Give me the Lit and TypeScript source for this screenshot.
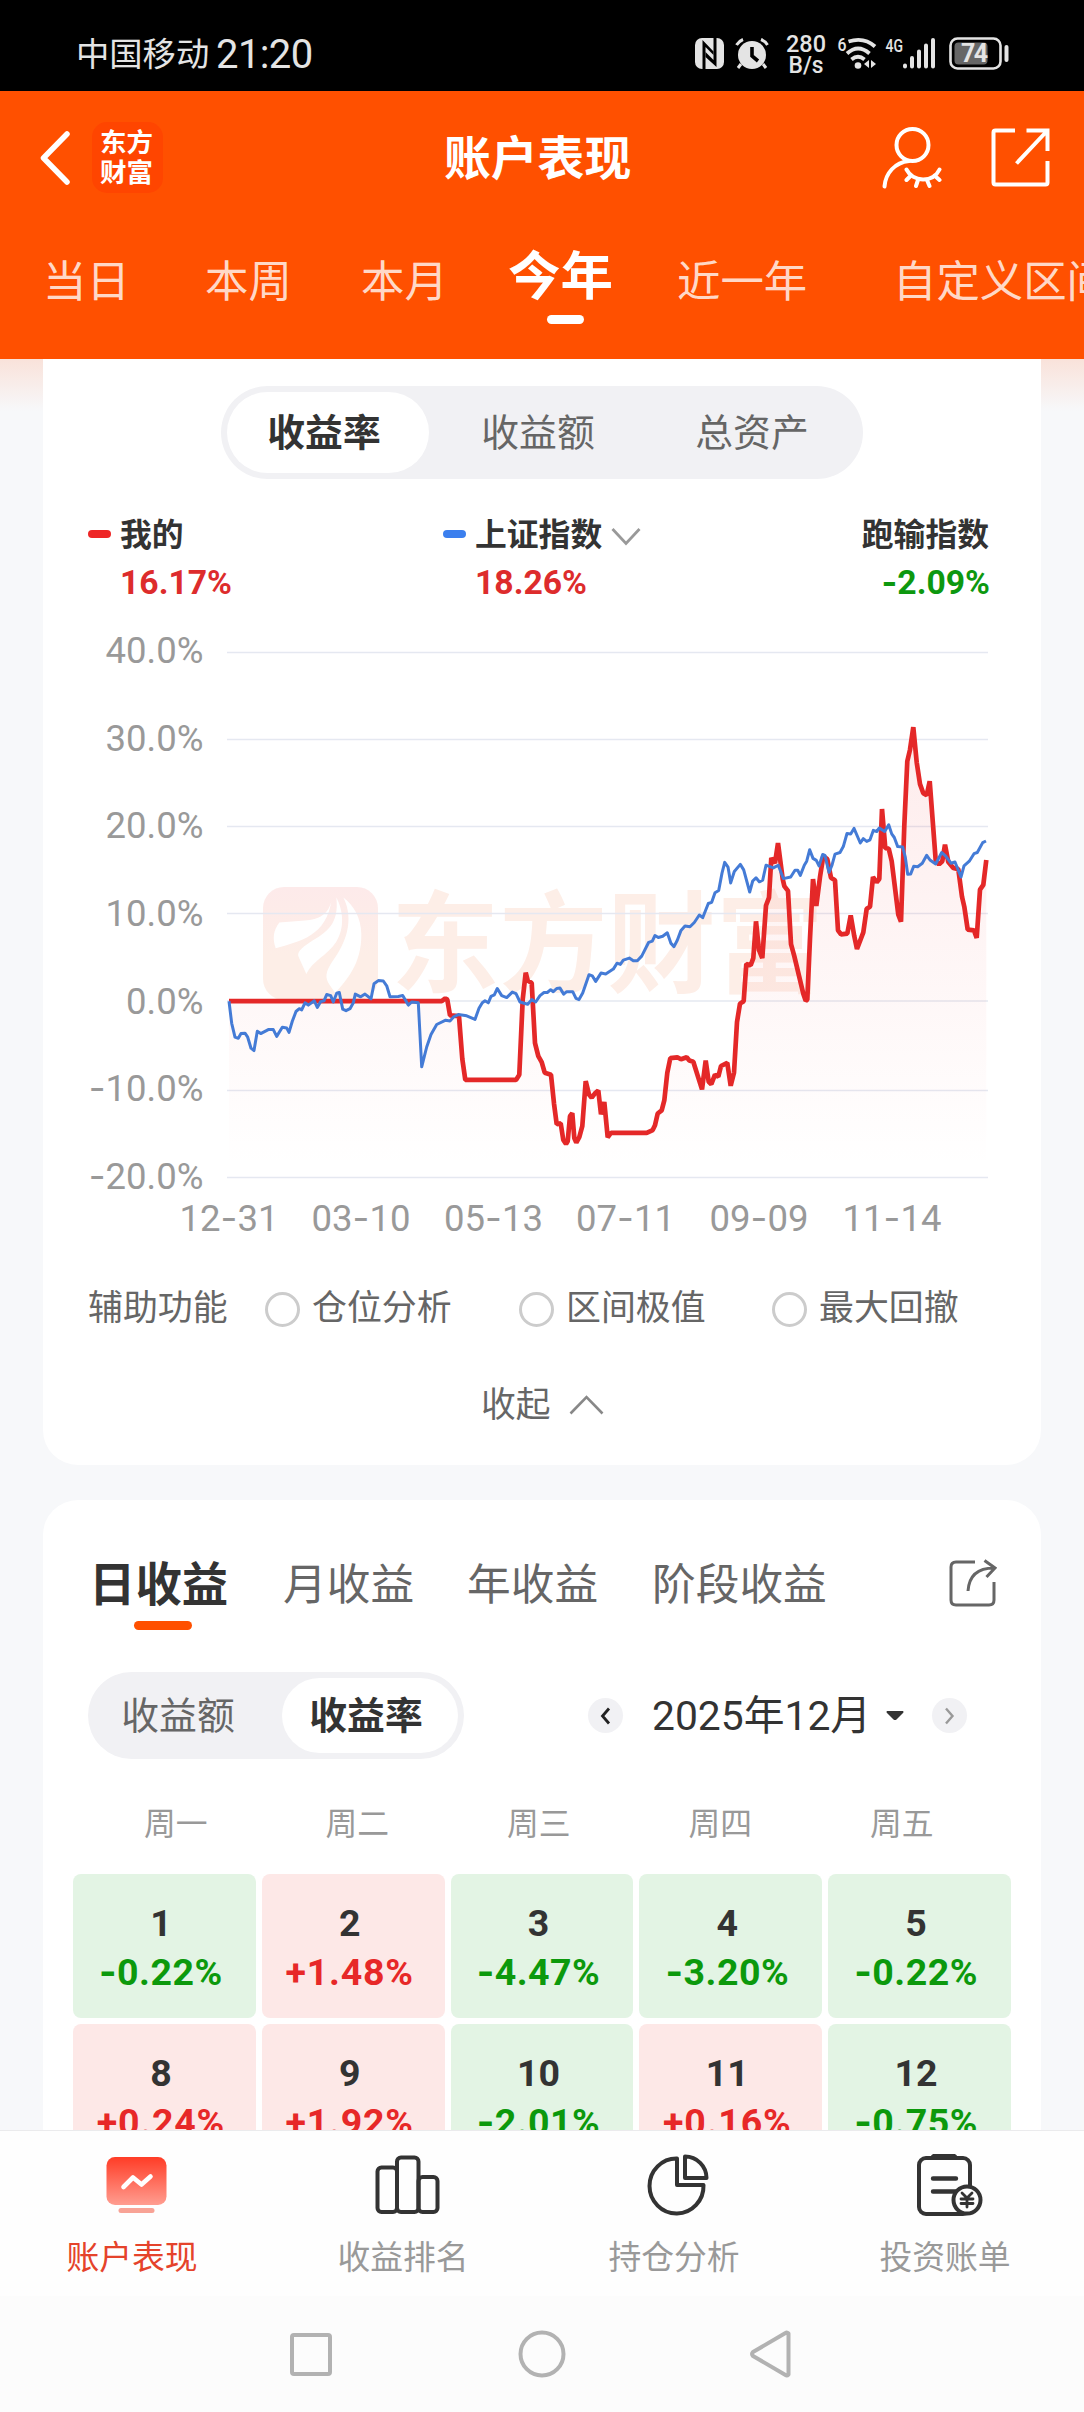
import { LitElement, html, svg, css } from "lit";
import { customElement, property } from "lit/decorators.js";

type Pt = [number, number];

/* Series are stored on a fine grid: 3 steps per pixel across, 2.529 per pixel down. */
const SX = 3;
const SY = 2.529;
const toPoints = (raw: string, dx = 0): Pt[] =>
  raw
    .trim()
    .split(/\s+/)
    .map((p) => p.split(",").map(Number))
    .map(([x, y]) => [(x + dx) / SX, y / SY] as Pt);
const path = (pts: Pt[]) => pts.map(([x, y]) => `${x.toFixed(1)},${y.toFixed(1)}`).join(" ");

const MINE: Pt[] = [
  ...toPoints(`507,964 1145,964 1156,957 1162,960 1170,1000 1197,1002 1207,1110 1216,1163 1368,1163 1378,1150
    1388,960 1397,892 1403,912 1415,918 1425,1070 1435,1103 1445,1118`),
  ...toPoints(
    `14,1145 33,1150 42,1223 50,1275 62,1273 70,1315 78,1325 83,1318 90,1255 97,1247 103,1310 109,1322
    118,1308 127,1280 137,1166 147,1200 155,1208 165,1197 175,1190 183,1250 193,1219 203,1308 213,1297 320,1297
    338,1290 345,1278 353,1248 365,1240 373,1215 382,1145 391,1108 412,1106 423,1111 440,1106 448,1114 460,1117
    486,1187 497,1114 506,1168 514,1174 525,1150 535,1155 543,1128 562,1120 572,1178 582,1145 591,1017 600,970
    611,964 619,870 632,873 640,855 648,762 657,835 667,855 678,722 687,702 694,602 705,615 714,564 728,655
    733,673 744,685 753,820 763,850 790,945 797,963 802,960 810,805 819,655 829,723 840,650 850,597 862,605
    873,652 885,658 894,785 903,795 922,793 932,747 943,800 951,832 970,790 980,730 990,725 999,650 1010,663
    1018,655 1026,478 1036,577 1046,578 1055,610 1075,745 1083,763 1093,520 1102,357 1110,328 1120,271 1130,360
    1140,415 1150,438 1160,443 1169,408 1187,608 1197,618 1207,610 1215,568 1225,612 1240,627 1255,630 1266,700
    1273,725 1283,783 1302,785 1310,804 1320,682 1330,670 1339,607`,
    1440,
  ),
];

const INDEX: Pt[] = [
  ...toPoints(`507,964 515,1020 525,1055 535,1058 543,1046 555,1045 563,1055 573,1083 582,1089 592,1040 602,1046
    625,1036 640,1036 650,1053 667,1030 680,1032 687,1043 697,1015 708,990 718,983 725,986 735,968 745,974 763,963
    772,980 782,965 792,963 800,947 812,950 820,966 830,944 838,942 848,984 858,988 870,983 880,968 886,946 902,953
    915,946 933,958 942,920 955,912 970,913 980,925 990,953 1015,952 1028,950 1045,974 1055,966 1075,968 1085,1130
    1100,1080 1113,1048 1130,1023 1157,1012 1170,1014 1182,1003 1195,998 1220,1001 1245,1010 1257,982 1267,968
    1275,963 1285,968 1293,952 1303,948 1312,932 1325,950 1340,955 1357,941 1368,945 1380,966 1403,972 1415,960
    1427,966`),
  ...toPoints(
    `0,950 12,942 22,942 32,935 40,940 50,932 60,931 71,946 80,940 98,940 108,957 117,960 128,943 147,897
    157,900 167,914 183,893 197,895 220,883 231,868 241,871 250,860 268,855 280,862 292,862 305,850 326,815 337,812
    345,798 355,803 368,800 382,791 393,818 402,826 412,810 423,785 435,774 450,776 463,765 478,746 488,753 505,717
    515,714 525,690 536,684 546,640 554,613 564,625 572,665 583,636 601,618 611,632 629,688 638,660 648,652 658,662
    668,658 678,620 700,627 715,620 730,654 752,650 765,633 773,633 781,646 793,620 800,610 809,581 819,603 829,608
    837,622 848,593 855,595 867,638 876,620 885,592 900,588 910,573 921,540 932,541 942,527 961,564 970,553 980,560
    990,556 1000,532 1010,535 1018,526 1034,535 1046,518 1055,541 1063,550 1073,573 1088,574 1096,600 1103,643
    1112,642 1121,623 1133,624 1147,615 1160,595 1170,607 1187,617 1205,588 1217,597 1233,615 1245,612 1263,650
    1272,622 1288,610 1302,591 1312,588 1328,563 1338,559`,
    1440,
  ),
];

const Y_AXIS = [
  { label: "40.0%", y: 32.500 },
  { label: "30.0%", y: 119.500 },
  { label: "20.0%", y: 206.500 },
  { label: "10.0%", y: 293.500 },
  { label: "0.0%", y: 381 },
  { label: "-10.0%", y: 470.500 },
  { label: "-20.0%", y: 557.500 },
];
const Y_BASE = [43, 131, 218, 305.5, 394, 481, 568.5];
const X_AXIS = [
  { label: "12-31", x: 169 },
  { label: "03-10", x: 301 },
  { label: "05-13", x: 433.5 },
  { label: "07-11", x: 565.5 },
  { label: "09-09", x: 699 },
  { label: "11-14", x: 832 },
];

/* The hyphen is set in a face with a longer stroke. */
const signed = (t: string) =>
  t.startsWith("-") ? html`<span class="minus">-</span>${t.slice(1)}` : t;

@customElement("status-bar")
class StatusBar extends LitElement {
  static styles = css`
    :host {
      display: flex;
      align-items: center;
      height: 91px;
      background: #000;
      color: #e4e4e4;
      padding: 16px 0 0 76px;
      box-sizing: border-box;
    }
    svg { display: block; flex: none; overflow: visible; }
    .carrier { font-size: 33.3px; width: 140px; line-height: 40px; padding-top: 2px; }
    .time { font-size: 40px; line-height: 44px; width: 479px; letter-spacing: -0.6px; padding-top: 3px; }
    .alarm { margin-left: 11px; }
    .tiny { font: 500 18px Roboto, sans-serif; }
    .rate { font: 500 23.5px Roboto, sans-serif; }
    .speed { margin-left: 18px; }
    .wifi { margin-left: 13px; }
    .cell { margin-left: 8px; }
    .battery { margin-left: 13px; }
    .level { font: 700 25px Roboto, sans-serif; }
  `;
  render() {
    return html`
      <span class="carrier">中国移动</span><span class="time">21:20</span>
      <svg width="29" height="31" viewBox="0 0 29 31">
        <rect width="29" height="31" rx="7" fill="#e4e4e4" />
        <path d="M7.500 31V2L18.500 13.500V17L10.500 9V31Z" fill="#000" />
        <path d="M21.500 0V29L10.500 19V14L18.500 22V0Z" fill="#000" />
      </svg>
      <svg class="alarm" width="34" height="31" viewBox="0 0 34 31">
        <circle cx="17" cy="17" r="14" fill="#e4e4e4" />
        <path d="M17 9V18L23 23" fill="none" stroke="#000" stroke-width="3.600" />
        <path d="M1.500 7Q4 3 8 1.500M32.500 7Q30 3 26 1.500M6 26L3 30M28 26L31 30" fill="none" stroke="#e4e4e4" stroke-width="3" />
      </svg>
      <svg class="speed" width="38" height="41" viewBox="0 0 38 41" fill="#e4e4e4">
        <text class="rate" x="-1" y="18.500" textLength="40" lengthAdjust="spacingAndGlyphs">280</text>
        <text class="rate" x="1.500" y="39.500" textLength="35" lengthAdjust="spacingAndGlyphs">B/s</text>
      </svg>
      <svg class="wifi" width="39" height="33" viewBox="0 0 39 33">
        <text class="tiny" x="-0.5" y="14" fill="#e4e4e4" textLength="9" lengthAdjust="spacingAndGlyphs">6</text>
        <g fill="none" stroke="#e4e4e4" stroke-width="3.800">
          <path d="M10.500 4.500Q26 -0.500 37 9.500" />
          <path d="M9 16.500Q20 6.500 31.500 16.500" />
          <path d="M13.500 22.500Q20 17 26.500 22.500" />
        </g>
        <circle cx="20" cy="28.500" r="3.300" fill="#e4e4e4" />
        <path d="M31 23V31L26 27ZM33 23V31L38 27Z" fill="#e4e4e4" />
      </svg>
      <svg class="cell" width="51" height="33" viewBox="0 0 51 33">
        <text class="tiny" x="0.5" y="14.500" fill="#e4e4e4" textLength="17.500" lengthAdjust="spacingAndGlyphs">4G</text>
        <g stroke="#e4e4e4" stroke-width="4" stroke-linecap="round">
          <path d="M20 28.500V29.500M27 21V29.500M34 14.500V29.500M41 8.500V29.500M48 3V29.500" />
        </g>
      </svg>
      <svg class="battery" width="60" height="33" viewBox="0 0 60 33">
        <rect x="1.500" y="1.500" width="50" height="30" rx="7" fill="none" stroke="#e4e4e4" stroke-width="2.600" />
        <rect x="5.500" y="5.500" width="33" height="22" rx="4" fill="#666" />
        <rect x="55.500" y="8" width="4" height="17" rx="2" fill="#e4e4e4" />
        <text class="level" x="12" y="25" fill="#e4e4e4" textLength="27">74</text>
      </svg>
    `;
  }
}

@customElement("app-header")
class AppHeader extends LitElement {
  static styles = css`
    :host {
      display: block;
      height: 268px;
      background: #ff5000;
      color: #fff;
      overflow: hidden;
    }
    svg { display: block; flex: none; }
    .top {
      display: grid;
      grid-template-columns: 52px 353px 1fr 58px 51px 59px 34px;
      align-items: center;
      padding: 31px 0 0 40px;
      height: 71px;
    }
    .logo {
      width: 71px;
      height: 71px;
      border-radius: 15px;
      background: #ff4500;
      font-weight: 700;
      font-size: 26.5px;
      line-height: 30px;
      text-align: center;
      padding: 6px 2px 0 0;
      box-sizing: border-box;
    }
    .title { font-size: 46.8px; line-height: 60px; font-weight: 700; padding-top: 2px; margin-left: -1px; }
    .share { grid-column: 6; }
    .ranges {
      display: grid;
      grid-template-columns: 162px 156px 147px 169px 216px 190px;
      padding: 42px 0 0 43px;
      height: 90px;
      align-items: center;
      font-size: 43.4px;
      line-height: 80px;
      white-space: nowrap;
      width: 1040px;
    }
    .range { color: rgba(255, 255, 255, 0.8); padding-top: 5px; }
    .range.on {
      color: #fff;
      font-size: 52.5px;
      font-weight: 700;
      padding-top: 0;
      margin-top: -6px;
      position: relative;
    }
    .range.on::after {
      content: "";
      position: absolute;
      left: 39px;
      bottom: -7px;
      width: 37px;
      height: 9px;
      border-radius: 5px;
      background: #fff;
    }
  `;
  render() {
    const ranges = ["当日", "本周", "本月", "今年", "近一年", "自定义区间"];
    return html`
      <div class="top">
        <svg width="30" height="54" viewBox="0 0 30 54">
          <path d="M27 3L3.500 27L27 51" fill="none" stroke="#fff" stroke-width="5.500" stroke-linecap="round" stroke-linejoin="round" />
        </svg>
        <div class="logo">东方<br />财富</div>
        <div class="title">账户表现</div>
        <svg width="60" height="62" viewBox="0 0 60 62" fill="none" stroke="#fff" stroke-width="4" stroke-linecap="round">
          <circle cx="30.500" cy="18" r="16" />
          <path d="M2.500 59.500C3.500 46 13 35.500 27 34" />
          <path d="M24.500 42.500C31 55.500 51 56 57.500 42.500" />
          <path d="M29 48.500L24.500 53M36 53L34 59M45 53L47.500 59M52.500 48.500L57.500 53" />
        </svg>
        <svg class="share" width="59" height="59" viewBox="0 0 59 59" fill="none" stroke="#fff" stroke-width="4">
          <path d="M24 2.500H4.500Q2.500 2.500 2.500 4.500V54.500Q2.500 56.500 4.500 56.500H54.500Q56.500 56.500 56.500 54.500V33" />
          <path d="M35.500 2.500H56.500V23M56 3L25.500 35.500" />
        </svg>
      </div>
      <div class="ranges">
        ${ranges.map((r, i) => html`<div class="range ${i === 3 ? "on" : ""}">${r}</div>`)}
      </div>
    `;
  }
}

@customElement("return-chart")
class ReturnChart extends LitElement {
  static styles = css`
    :host { display: block; width: 945px; height: 622px; }
    svg { display: block; }
    .axis { font: 400 36.500px Roboto, sans-serif; fill: #999; }
    .minus { font-family: Inter, sans-serif; }
    .mark { font: 700 110px "Noto Sans CJK SC", sans-serif; fill: #fdeee7; }
  `;
  render() {
    const area = `169,557 ${path(MINE)} 926.3,557`;
    const minus = svg`<tspan class="minus">-</tspan>`;
    return html`
      <svg width="945" height="622" viewBox="0 0 945 622">
        <defs>
          <linearGradient id="area" gradientUnits="userSpaceOnUse" x1="0" y1="107" x2="0" y2="550">
            <stop offset="0" stop-color="#ee2626" stop-opacity="0.090" />
            <stop offset="1" stop-color="#ee2626" stop-opacity="0" />
          </linearGradient>
          <linearGradient id="badge" x1="0" y1="0" x2="0" y2="1">
            <stop offset="0" stop-color="#fdeaea" />
            <stop offset="0.6" stop-color="#fdeee7" />
          </linearGradient>
        </defs>
        <rect x="203" y="267" width="115" height="113" rx="21" fill="url(#badge)" />
        <g fill="#fff" transform="scale(0.33333 0.39541)">
          <path d="M815 706C808 745 775 757 735 760L658 765C640 785 637 805 647 830C720 812 800 800 815 706Z" />
          <path d="M829 702C838 770 800 790 750 815C722 830 710 842 716 852L739 895C760 860 800 850 828 815C855 780 850 735 829 702Z" />
          <path d="M850 702C885 760 855 820 820 860C795 890 795 905 808 922L826 944C860 910 905 870 904 795C903 750 880 722 850 702Z" />
        </g>
        <text class="mark" x="331" y="364" textLength="433" lengthAdjust="spacingAndGlyphs">东方财富</text>
        ${Y_AXIS.map((t, i) => {
          const neg = t.label.startsWith("-");
          return svg`
            <path d="M167 ${t.y}H928" stroke="#e5e8f1" stroke-width="1.300" />
            <text class="axis" x="143.500" y=${Y_BASE[i]} text-anchor="end">${neg ? minus : ""}${neg ? t.label.slice(1) : t.label}</text>`;
        })}
        ${X_AXIS.map((t) => {
          const [m, d] = t.label.split("-");
          return svg`<text class="axis" x=${t.x} y="611" text-anchor="middle">${m}${minus}${d}</text>`;
        })}
        <polygon points=${area} fill="url(#area)" />
        <polyline points=${path(MINE)} fill="none" stroke="#e42828" stroke-width="4.700" stroke-linejoin="bevel" />
        <polyline points=${path(INDEX)} fill="none" stroke="#447bd6" stroke-width="3" stroke-linejoin="round" />
      </svg>
    `;
  }
}

@customElement("pill-switch")
class PillSwitch extends LitElement {
  @property({ attribute: false }) items: string[] = [];
  @property({ type: Number }) active = 0;
  static styles = css`
    :host {
      display: flex;
      background: #f1f1f4;
      border-radius: 47px;
      padding: 6px;
      box-sizing: border-box;
    }
    .opt {
      flex: 1;
      display: flex;
      align-items: center;
      justify-content: center;
      font-size: 37.800px;
      line-height: 44px;
      color: #666;
      border-radius: 41px;
      padding: var(--inset);
    }
    .opt.on {
      background: #fff;
      color: #333;
      font-weight: 700;
      flex: 0 0 var(--thumb);
      box-sizing: border-box;
      padding: 1px 8px 0 0;
    }
  `;
  render() {
    return this.items.map(
      (t, i) => html`<div class="opt ${i === this.active ? "on" : ""}">${t}</div>`,
    );
  }
}

@customElement("performance-card")
class PerformanceCard extends LitElement {
  static styles = css`
    :host {
      display: block;
      background: #fff;
      height: 1106px;
      margin: 0 43px;
      border-radius: 0 0 35px 35px;
      padding-top: 27px;
      box-sizing: border-box;
    }
    svg { display: block; flex: none; }
    pill-switch { width: 642px; height: 93px; margin-left: 178px; --thumb: 202px; --inset: 1px 0 0 4px; }
    .legend {
      display: grid;
      grid-template-columns: 355px 1fr auto;
      padding: 0 52px 0 45px;
      margin-top: 35px;
    }
    .name {
      display: flex;
      align-items: center;
      height: 40px;
      font-size: 31.800px;
      font-weight: 700;
      color: #333;
      line-height: 40px;
    }
    .name span { padding-top: 2px; }
    .name svg { margin-left: 9px; margin-top: 4px; }
    .dash { width: 23px; height: 8px; border-radius: 4px; background: #ee2626; margin-right: 9px; }
    .dash.blue { background: #3b7fee; }
    .value {
      margin: 9px 0 0 32px;
      height: 40px;
      line-height: 40px;
      font-size: 33.700px;
      font-weight: 700;
      color: #dd2c2c;
    }
    .value.down { color: #0d980f; text-align: right; margin: 8px -1px 0 0; }
    .minus { font-family: Inter, sans-serif; }
    return-chart { margin: 17px 0 0 17px; }
    .aux {
      display: grid;
      grid-template-columns: 177px 254px 253px auto;
      padding-left: 45px;
      margin-top: 47px;
      height: 40px;
      align-items: center;
      font-size: 34.900px;
      line-height: 40px;
      color: #666;
    }
    .pick { display: flex; align-items: center; gap: 12px; }
    .ring { width: 35px; height: 35px; border-radius: 50%; border: 3px solid #ccc; box-sizing: border-box; }
    .fold {
      display: flex;
      align-items: center;
      gap: 18px;
      margin: 56px 0 0 438px;
      height: 40px;
      font-size: 34.800px;
      line-height: 40px;
      color: #666;
    }
  `;
  render() {
    return html`
      <pill-switch .items=${["收益率", "收益额", "总资产"]} .active=${0}></pill-switch>
      <div class="legend">
        <div>
          <div class="name"><i class="dash"></i><span>我的</span></div>
          <div class="value">16.17%</div>
        </div>
        <div>
          <div class="name">
            <i class="dash blue"></i><span>上证指数</span>
            <svg width="30" height="19" viewBox="0 0 30 19"><path d="M1.500 2L15 16.500L28.500 2" fill="none" stroke="#999" stroke-width="2.800" /></svg>
          </div>
          <div class="value">18.26%</div>
        </div>
        <div>
          <div class="name"><span>跑输指数</span></div>
          <div class="value down">${signed("-2.09%")}</div>
        </div>
      </div>
      <return-chart></return-chart>
      <div class="aux">
        <span>辅助功能</span>
        ${["仓位分析", "区间极值", "最大回撤"].map(
          (t) => html`<span class="pick"><i class="ring"></i>${t}</span>`,
        )}
      </div>
      <div class="fold">
        收起
        <svg width="35" height="20" viewBox="0 0 35 20"><path d="M1.500 18.500L17.500 2L33.500 18.500" fill="none" stroke="#888" stroke-width="2.600" /></svg>
      </div>
    `;
  }
}

@customElement("calendar-card")
class CalendarCard extends LitElement {
  static styles = css`
    :host {
      display: block;
      background: #fff;
      height: 800px;
      margin: 35px 43px 0;
      border-radius: 35px 35px 0 0;
      padding-top: 59px;
      box-sizing: border-box;
      color: #333;
    }
    svg { display: block; flex: none; }
    .tabs {
      display: grid;
      grid-template-columns: 194px 184px 185px 297px auto;
      padding-left: 46px;
      height: 71px;
      font-size: 43.700px;
      line-height: 53px;
      color: #666;
    }
    .tab.on { color: #333; font-weight: 700; font-size: 46.400px; }
    .tab.on::after {
      content: "";
      display: block;
      width: 58px;
      height: 9px;
      border-radius: 5px;
      background: #ff5000;
      margin: 9px 0 0 45px;
    }
    .controls { display: flex; align-items: center; margin: 42px 0 0 45px; height: 87px; }
    pill-switch { width: 376px; height: 87px; --thumb: 176px; --inset: 0 20px 0 0; }
    .step {
      width: 35px;
      height: 35px;
      border-radius: 50%;
      background: #f1f1f4;
      display: flex;
      align-items: center;
      justify-content: center;
    }
    .prev { margin-left: 124px; }
    .month { width: 234px; margin-left: 29px; font-size: 40.800px; line-height: 50px; padding-top: 1px; }
    .next { margin-left: 28px; }
    .week {
      display: grid;
      grid-template-columns: repeat(5, 181.5px);
      padding-left: 42px;
      margin-top: 45px;
      text-align: center;
      font-size: 31.800px;
      line-height: 40px;
      color: #999;
    }
    .days {
      display: grid;
      grid-template-columns: repeat(5, 1fr);
      grid-auto-rows: 144px;
      gap: 6px;
      margin: 30px 30px 0;
      font-weight: 700;
      text-align: center;
      font-size: 37.500px;
    }
    .day {
      border-radius: 8px;
      background: #e3f4e4;
      padding: 25px 7px 0 0;
      line-height: 48.500px;
    }
    .day.up { background: #fde8e7; }
    .pct { color: #0c990c; letter-spacing: 0.500px; white-space: nowrap; }
    .minus { font-family: Inter, sans-serif; line-height: 1; }
    .up .pct { color: #e72828; letter-spacing: 0.800px; }
  `;
  render() {
    const days: [number, string][] = [
      [1, "-0.22%"], [2, "+1.48%"], [3, "-4.47%"], [4, "-3.20%"], [5, "-0.22%"],
      [8, "+0.24%"], [9, "+1.92%"], [10, "-2.01%"], [11, "+0.16%"], [12, "-0.75%"],
    ];
    return html`
      <div class="tabs">
        <div class="tab on">日收益</div>
        <div class="tab">月收益</div>
        <div class="tab">年收益</div>
        <div class="tab">阶段收益</div>
        <svg width="48" height="49" viewBox="0 0 48 49" fill="none" stroke="#666" stroke-width="3">
          <path d="M26 3H7Q2 3 2 8V41Q2 46 7 46H40Q45 46 45 41V23" />
          <path d="M19 32C20 17 29 9 45 9M35.500 1.500L46 9L37.500 18" />
        </svg>
      </div>
      <div class="controls">
        <pill-switch .items=${["收益额", "收益率"]} .active=${1}></pill-switch>
        <div class="step prev">
          <svg width="11" height="18" viewBox="0 0 11 18"><path d="M9 1.500L2.500 9L9 16.500" fill="none" stroke="#222" stroke-width="2.800" /></svg>
        </div>
        <div class="month">2025年12月</div>
        <svg width="18" height="9" viewBox="0 0 18 9"><path d="M1 0H17Q18 1 17 2L10.500 8.500Q9 9.500 7.500 8.500L1 2Q0 1 1 0Z" fill="#333" /></svg>
        <div class="step next">
          <svg width="11" height="18" viewBox="0 0 11 18"><path d="M2 1.500L8.500 9L2 16.500" fill="none" stroke="#999" stroke-width="2.400" /></svg>
        </div>
      </div>
      <div class="week">
        ${["周一", "周二", "周三", "周四", "周五"].map((d) => html`<div>${d}</div>`)}
      </div>
      <div class="days">
        ${days.map(
          ([d, p]) => html`<div class="day ${p.startsWith("+") ? "up" : ""}">
            <div>${d}</div>
            <div class="pct">${signed(p)}</div>
          </div>`,
        )}
      </div>
    `;
  }
}

@customElement("tab-bar")
class TabBar extends LitElement {
  static styles = css`
    :host {
      display: grid;
      grid-template-columns: repeat(4, 271px);
      height: 166px;
      border-top: 1px solid #ebebed;
      background: #fefefe;
      box-sizing: border-box;
      font-size: 32.800px;
      line-height: 40px;
      color: #999;
    }
    .item { display: flex; flex-direction: column; align-items: center; padding-top: 21px; }
    .item svg { display: block; height: 66px; width: 70px; }
    .label { padding: 20px 7px 0 0; }
    .on { color: #e5432b; }
  `;
  render() {
    return html`
      <div class="item on">
        <svg viewBox="0 0 70 66">
          <defs>
            <linearGradient id="g" x1="0" y1="0" x2="0" y2="1">
              <stop offset="0" stop-color="#ff3c26" />
              <stop offset="1" stop-color="#ff9d90" />
            </linearGradient>
          </defs>
          <rect x="5.500" y="5" width="60" height="48" rx="8.500" fill="url(#g)" />
          <rect x="17.500" y="56" width="36" height="5" rx="2.500" fill="#f8a396" />
          <path d="M22.500 35L32 25.500L40.500 32.500L49.500 24.500" fill="none" stroke="#fff" stroke-width="4.600" stroke-linecap="round" stroke-linejoin="round" />
        </svg>
        <div class="label">账户表现</div>
      </div>
      <div class="item">
        <svg viewBox="0 0 70 66" fill="none" stroke="#333" stroke-width="4">
          <rect x="5.500" y="15.500" width="19.500" height="44.500" rx="4" />
          <rect x="25" y="5.500" width="21.500" height="54.500" rx="4" />
          <rect x="46.500" y="25" width="19" height="35" rx="4" />
        </svg>
        <div class="label">收益排名</div>
      </div>
      <div class="item">
        <svg viewBox="0 0 70 66" fill="none" stroke="#333" stroke-width="4" stroke-linejoin="round">
          <path d="M34 6.500A27 27.500 0 1 0 60.500 33H34Z" />
          <path d="M42 4.500V26H63.500A21.500 21.500 0 0 0 42 4.500Z" />
        </svg>
        <div class="label">持仓分析</div>
      </div>
      <div class="item">
        <svg viewBox="0 0 70 66" fill="none" stroke="#333" stroke-width="4" stroke-linecap="round">
          <path d="M19 2H41L44 6H16Z" fill="#333" stroke="none" />
          <rect x="5" y="6" width="51" height="56" rx="7" />
          <path d="M19 4.500H41" />
          <path d="M19 26.500H42M19 39.500H42" stroke-width="4.400" />
          <circle cx="53" cy="48" r="13.500" fill="#fefefe" />
          <path d="M48 41L53 46L58 41M53 46.500V55M47 47H59M47 51.500H59" stroke-width="2.800" />
        </svg>
        <div class="label">投资账单</div>
      </div>
    `;
  }
}

@customElement("app-root")
class AppRoot extends LitElement {
  static styles = css`
    :host {
      display: block;
      width: 1084px;
      height: 2412px;
      overflow: hidden;
      background: #f7f8fa;
      font-family: Roboto, "Noto Sans CJK SC", sans-serif;
    }
    .scroll {
      height: 1771px;
      overflow: hidden;
      background: linear-gradient(#f9e2da, #f7f8fa 52px);
    }
    .sysnav {
      height: 116px;
      background: #fcfcfc;
      display: grid;
      grid-template-columns: 42px 48px 42px;
      column-gap: 185px;
      padding-left: 290px;
      align-items: center;
    }
    .sysnav svg { display: block; overflow: visible; }
  `;
  render() {
    return html`
      <status-bar></status-bar>
      <app-header></app-header>
      <div class="scroll">
        <performance-card></performance-card>
        <calendar-card></calendar-card>
      </div>
      <tab-bar></tab-bar>
      <div class="sysnav">
        <svg width="42" height="43" viewBox="0 0 42 43"><rect x="2" y="2" width="38" height="39" rx="2" fill="none" stroke="#b2b2b2" stroke-width="4" /></svg>
        <svg width="48" height="48" viewBox="0 0 48 48"><circle cx="25" cy="24" r="21.500" fill="none" stroke="#b2b2b2" stroke-width="4" /></svg>
        <svg width="42" height="48" viewBox="0 0 42 48"><path d="M38.500 3.500V44.500Q37 46 35.500 45L3 26Q1 24 3 22L35.500 3Q37 2 38.500 3.500Z" fill="none" stroke="#b2b2b2" stroke-width="4" stroke-linejoin="round" /></svg>
      </div>
    `;
  }
}
